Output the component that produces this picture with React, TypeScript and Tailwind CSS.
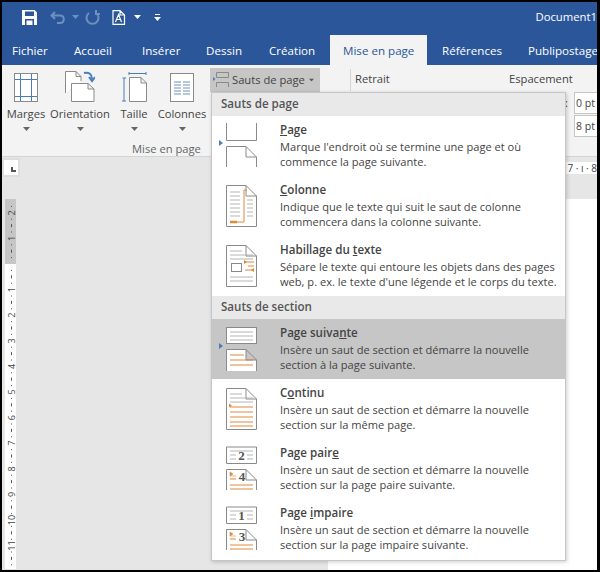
const FONT = { fontFamily: '"Open Sans", "Noto Sans", sans-serif' };

const GRAY = "#8a8a8a";
const LINE = "#b5b5b5";
const ORANGE = "#e08a3c";
const BLUE = "#4a7ebb";

function Caret({ className = "" }: { className?: string }) {
  return (
    <svg width="7" height="4" viewBox="0 0 7 4" className={className}>
      <path d="M0 0H7L3.5 4Z" fill="currentColor" />
    </svg>
  );
}

function SaveIcon() {
  return (
    <svg width="15" height="15" viewBox="0 0 15 15">
      <path d="M0 0H12.5L15 2.5V15H0Z" fill="#fff" />
      <rect x="3" y="1.5" width="9" height="4.5" fill="#2b579a" />
      <rect x="3" y="9" width="9" height="6" fill="#2b579a" />
      <rect x="4.5" y="10.5" width="6" height="4.5" fill="#fff" />
    </svg>
  );
}

function TitleBar() {
  return (
    <div className="flex h-[33px] items-center pb-[3px] pl-[20px] text-white">
      <SaveIcon />
      <svg width="16" height="15" viewBox="0 0 16 15" className="ml-[13px]" fill="none" stroke="#6f8fbf" strokeWidth="2">
        <path d="M5 2L1.5 5.5L5 9M2 5.5H10C15 5.5 15 13 10 13H7" />
      </svg>
      <Caret className="ml-[6px] text-[#6f8fbf]" />
      <svg width="15" height="15" viewBox="0 0 15 15" className="ml-[6px]" fill="none" stroke="#6f8fbf" strokeWidth="2">
        <path d="M4 3A6 6 0 1 0 11 3M11 0V4H15" />
      </svg>
      <svg width="14" height="15" viewBox="0 0 14 15" className="ml-[12px]" fill="none" stroke="#fff" strokeWidth="1.2">
        <path d="M1 .7H8L12.5 5V14.3H1ZM8 .7V5H12.5M3.5 12L6.5 4.5L9.5 12M4.5 9.5H8.5" />
      </svg>
      <Caret className="ml-[8px]" />
      <svg width="7" height="7" viewBox="0 0 7 7" className="ml-[13px]">
        <path d="M1 0H6V1H1ZM0 3H7L3.5 7Z" fill="#fff" />
      </svg>
      <span className="ml-auto text-[11.3px] leading-none whitespace-nowrap text-white">Document1</span>
    </div>
  );
}

function Tabs() {
  const tabs = [
    { label: "Fichier", width: "w-[62px]" },
    { label: "Accueil", width: "w-[68px]" },
    { label: "Insérer", width: "w-[64px]" },
    { label: "Dessin", width: "w-[63px]" },
    { label: "Création", width: "w-[71px]" },
  ];
  return (
    <div className="flex h-[30px] overflow-hidden text-[11.6px] text-white">
      {tabs.map((t) => (
        <div key={t.label} className={`${t.width} shrink-0 pt-[7px] pl-[10px]`}>
          {t.label}
        </div>
      ))}
      <div className="w-[97px] shrink-0 bg-[#f3f3f3] pt-[7px] pl-[13px] whitespace-nowrap text-[#2b579a]">Mise en page</div>
      <div className="w-[86px] shrink-0 pt-[7px] pl-[15px]">Références</div>
      <div className="shrink-0 pt-[7px] pl-[15px] whitespace-nowrap">Publipostage</div>
    </div>
  );
}

function MargesIcon() {
  return (
    <svg width="24" height="29" viewBox="0 0 24 29" fill="none">
      <rect x=".5" y=".5" width="23" height="28" stroke={GRAY} fill="#fff" />
      <path d="M6.5 1V28M17.5 1V28M1 6.5H23M1 23.5H23" stroke={BLUE} />
    </svg>
  );
}

function OrientationIcon() {
  return (
    <svg width="30" height="31" viewBox="0 0 30 31" fill="none">
      <path d="M.5 22V.5H11L16 5.5V10M11 .5V5.5H16" stroke={GRAY} fill="#fff" />
      <path d="M6.5 30.5V12.5H23L29 18V30.5ZM23 12.5V18H29" stroke={GRAY} fill="#fff" />
      <path d="M19 2C24 1 27 3 27 8M24 6L27 10L30 6" stroke={BLUE} strokeWidth="2" />
    </svg>
  );
}

function TailleIcon() {
  return (
    <svg width="25" height="30" viewBox="0 0 25 30" fill="none">
      <path d="M7.5 29.5V5.5H19L24.5 11V29.5ZM19 5.5V11H24.5" stroke={GRAY} fill="#fff" />
      <path d="M.5 6H4M2 6V29M0 29H4M7 1.5H24M7 0V3M24 0V3" stroke={BLUE} />
    </svg>
  );
}

function ColonnesIcon() {
  return (
    <svg width="24" height="29" viewBox="0 0 24 29" fill="none">
      <rect x=".5" y=".5" width="23" height="28" stroke={GRAY} fill="#fff" />
      <path d="M4 9H11M13 9H20M4 12H11M13 12H20M4 15H11M13 15H20M4 18H11M13 18H20M4 21H11M13 21H20" stroke="#6d8fbd" />
    </svg>
  );
}

function RibbonButton({ label, width, children }: { label: string; width: string; children: React.ReactNode }) {
  return (
    <div className={`${width} flex flex-col items-center`}>
      <div className="flex h-[35px] items-end">{children}</div>
      <div className="mt-[4px] text-[11.2px] leading-[16px] whitespace-nowrap text-[#444]">{label}</div>
      <Caret className="mt-[5px] text-[#666]" />
    </div>
  );
}

function Ribbon() {
  return (
    <div className="flex h-[92px] border-b border-[#d4d4d4] bg-[#f3f3f3] pl-[2px] text-[#444]">
      <div className="flex w-[206px] shrink-0 flex-col pt-[2px]">
        <div className="flex">
          <RibbonButton label="Marges" width="w-[44px]">
            <MargesIcon />
          </RibbonButton>
          <RibbonButton label="Orientation" width="w-[64px]">
            <OrientationIcon />
          </RibbonButton>
          <RibbonButton label="Taille" width="w-[44px]">
            <TailleIcon />
          </RibbonButton>
          <RibbonButton label="Colonnes" width="w-[52px]">
            <ColonnesIcon />
          </RibbonButton>
        </div>
        <div className="mt-[10px] pl-[128px] text-[11.2px] leading-[16px] text-[#666]">Mise en page</div>
      </div>
      <div className="mt-[3px] flex h-[24px] w-[110px] shrink-0 items-center bg-[#c6c6c6] pl-[3px]">
        <svg width="16" height="16" viewBox="0 0 16 16" fill="none">
          <path d="M3.5 .5H15.5V5.5H3.5ZM3.5 15V10.5H15.5V15" stroke={GRAY} />
          <path d="M0 5L2.5 7L0 9Z" fill={BLUE} />
        </svg>
        <span className="ml-[3px] text-[11.2px] whitespace-nowrap">Sauts de page</span>
        <Caret className="ml-[3px] scale-75 text-[#555]" />
      </div>
      <div className="mt-[4px] ml-[30px] h-[22px] w-px shrink-0 bg-[#d4d4d4]" />
      <div className="w-[158px] shrink-0 pt-[6px] pl-[4px] text-[11.2px] leading-[16px]">Retrait</div>
      <div className="flex w-[88px] shrink-0 flex-col pt-[6px]">
        <div className="text-[11.2px] leading-[16px] whitespace-nowrap">Espacement</div>
        <div className="mt-[5px] flex">
          <div className="w-[65px] shrink-0 pt-[3px] pr-[6px] text-right text-[11.2px] leading-[16px]">:</div>
          <div className="flex flex-col gap-[1px]">
            <div className="h-[22px] w-[23px] border border-r-0 border-[#c6c6c6] bg-white pl-[1px] text-[10.5px] leading-[20px] whitespace-nowrap">0 pt</div>
            <div className="h-[22px] w-[23px] border border-r-0 border-[#c6c6c6] bg-white pl-[1px] text-[10.5px] leading-[20px] whitespace-nowrap">8 pt</div>
          </div>
        </div>
      </div>
    </div>
  );
}

function VerticalRuler() {
  const unit = 25.6;
  const zero = 65;
  const marks: React.ReactNode[] = [];
  for (let i = -10; i <= 56; i++) {
    const y = zero + (i * unit) / 4;
    if (y < 2 || y > 370) continue;
    if (i % 4 === 0) {
      const n = Math.abs(i / 4);
      if (n === 0) continue;
      marks.push(
        <text key={i} x="0" y="0" transform={`translate(10 ${y}) rotate(-90)`} textAnchor="middle" fontSize="9" fill="#444">
          {n}
        </text>,
      );
    } else if (i % 2 === 0) {
      marks.push(<rect key={i} x="6" y={y - 1.5} width="1" height="3" fill="#555" />);
    } else {
      marks.push(<rect key={i} x="6" y={y - 0.5} width="1" height="1" fill="#555" />);
    }
  }
  return (
    <svg width="11" height="370" viewBox="0 0 11 370" className="mt-[24px] ml-[3px] block overflow-visible">
      <rect width="11" height="65" fill="#c6c6c6" />
      <rect y="65" width="11" height="305" fill="#fff" />
      {marks}
    </svg>
  );
}

function Workspace() {
  return (
    <div className="flex min-h-0 flex-1 overflow-hidden bg-[#e6e6e6]">
      <div className="w-[16px] shrink-0">
        <div className="mt-[3px] ml-[2px] flex h-[15px] w-[14px] items-end justify-end bg-white pr-[2px] pb-[3px] ring-2 ring-[#dedede]">
          <div className="h-[5px] w-[5px] border-b-2 border-l-2 border-[#555]" />
        </div>
        <VerticalRuler />
      </div>
      <div className="flex flex-1 flex-col pl-[310px]">
        <div className="mt-[5px] flex h-[12px] items-center justify-end bg-white text-[10px] leading-none text-[#444]">7 · ı · 8</div>
        <div className="mt-[25px] flex-1 bg-white" />
      </div>
    </div>
  );
}

function Page({ y1 = 30.5, y2 = 51 }: { y1?: number; y2?: number }) {
  return <path d={`M10.5 ${y2}V${y1}H30L40.5 41V${y2}M30 ${y1}V41H40.5`} stroke={GRAY} fill="#fff" />;
}

function FullPage({ children }: { children?: React.ReactNode }) {
  return (
    <>
      <path d="M10.5 9.5H30L40.5 20V50.5H10.5ZM30 9.5V20H40.5" stroke={GRAY} fill="#fff" />
      {children}
    </>
  );
}

const ICONS: Record<string, React.ReactNode> = {
  page: (
    <>
      <path d="M10.5 7V24.5H40.5V7" stroke={GRAY} />
      <Page />
      <path d="M3 24L7 27L3 30Z" fill={BLUE} stroke="none" />
    </>
  ),
  colonne: (
    <FullPage>
      <path d="M14 16H24M14 20H24M14 24H24M14 28H24M14 32H24M14 36H24M14 40H24M31 24H37M31 28H37M31 32H37M31 36H37M31 40H37" stroke={LINE} />
      <path d="M14 46H21" stroke={ORANGE} strokeWidth="2.5" />
      <path d="M21 46H28V14H31" stroke={ORANGE} />
    </FullPage>
  ),
  habillage: (
    <FullPage>
      <path d="M14 15H26M14 19H37M14 23H37M14 41H37M14 45H37" stroke={LINE} />
      <rect x="15.5" y="27.5" width="10" height="8" stroke={GRAY} fill="#fff" />
      <path d="M29 26H38M32 30H38M29 34H38" stroke={ORANGE} />
      <path d="M28 24L31 26L28 28ZM38 32L35 34L38 36Z" fill={ORANGE} stroke="none" />
    </FullPage>
  ),
  suivante: (
    <>
      <rect x="10.5" y="8.5" width="30" height="16" stroke={GRAY} fill="#fff" />
      <path d="M14 13H37M14 17H37M14 21H37" stroke={LINE} />
      <Page y2={52} />
      <path d="M14 36H28M14 41H37M14 46H37" stroke={ORANGE} />
      <path d="M3 24L7 27L3 30Z" fill={BLUE} stroke="none" />
    </>
  ),
  continu: (
    <FullPage>
      <path d="M14 15H26M14 19H37M14 23H37" stroke={LINE} />
      <path d="M14 28H37M14 33H37M14 38H37M14 43H37M14 47H37" stroke={ORANGE} />
      <path d="M13 24.5L16 26.5L13 28.5Z" fill={ORANGE} stroke="none" />
    </FullPage>
  ),
};

function NumberedIcon({ top, bottom }: { top: string; bottom: string }) {
  return (
    <>
      <path d="M10.5 8H40.5M10.5 8V24.5H40.5V8" stroke={GRAY} fill="#fff" />
      <path d="M14 12H37M14 16H20M31 16H37M14 20H20M31 20H37" stroke={LINE} />
      <text x="25.5" y="21" textAnchor="middle" fontSize="13" fontWeight="700" fill="#555" fontFamily='"Liberation Serif", serif'>
        {top}
      </text>
      <Page />
      <path d="M14 40H20M14 46H37M14 50H37" stroke={ORANGE} />
      <path d="M14 33L17 35L14 37ZM14 37H20" fill={ORANGE} stroke={ORANGE} strokeWidth=".6" />
      <text x="26" y="42" textAnchor="middle" fontSize="13" fontWeight="700" fill="#555" fontFamily='"Liberation Serif", serif'>
        {bottom}
      </text>
    </>
  );
}

function MenuItem({
  icon,
  title,
  desc,
  active = false,
}: {
  icon: React.ReactNode;
  title: React.ReactNode;
  desc: string[];
  active?: boolean;
}) {
  return (
    <div className={`flex h-[60px] ${active ? "bg-[#c6c6c6]" : ""}`}>
      <svg width="44" height="60" viewBox="0 0 44 60" fill="none" className="ml-[4px] shrink-0">
        {icon}
      </svg>
      <div className="ml-[20px] pt-[6px]">
        <div className="text-[11.6px] leading-[16px] font-semibold text-[#444]">{title}</div>
        <div className="mt-[1px] text-[11.1px] leading-[15px] whitespace-nowrap text-[#444]">
          {desc.map((d) => (
            <div key={d}>{d}</div>
          ))}
        </div>
      </div>
    </div>
  );
}

function MenuHeader({ label }: { label: string }) {
  return <div className="h-[23px] bg-[#e9e9e9] pl-[9px] text-[11.6px] leading-[22px] font-semibold text-[#555]">{label}</div>;
}

function BreaksMenu() {
  return (
    <div className="absolute top-[92px] left-[211px] w-[355px] border border-[#c6c6c6] bg-white pb-[1px] shadow-[1px_1px_4px_rgba(0,0,0,0.2)]">
      <MenuHeader label="Sauts de page" />
      <MenuItem
        icon={ICONS.page}
        title={<><u>P</u>age</>}
        desc={["Marque l'endroit où se termine une page et où", "commence la page suivante."]}
      />
      <MenuItem
        icon={ICONS.colonne}
        title={<><u>C</u>olonne</>}
        desc={["Indique que le texte qui suit le saut de colonne", "commencera dans la colonne suivante."]}
      />
      <MenuItem
        icon={ICONS.habillage}
        title={<>Habillage du <u>t</u>exte</>}
        desc={["Sépare le texte qui entoure les objets dans des pages", "web, p. ex. le texte d'une légende et le corps du texte."]}
      />
      <MenuHeader label="Sauts de section" />
      <MenuItem
        active
        icon={ICONS.suivante}
        title={<>Page suiva<u>n</u>te</>}
        desc={["Insère un saut de section et démarre la nouvelle", "section à la page suivante."]}
      />
      <MenuItem
        icon={ICONS.continu}
        title={<>C<u>o</u>ntinu</>}
        desc={["Insère un saut de section et démarre la nouvelle", "section sur la même page."]}
      />
      <MenuItem
        icon={<NumberedIcon top="2" bottom="4" />}
        title={<>Page pair<u>e</u></>}
        desc={["Insère un saut de section et démarre la nouvelle", "section sur la page paire suivante."]}
      />
      <MenuItem
        icon={<NumberedIcon top="1" bottom="3" />}
        title={<>Page <u>i</u>mpaire</>}
        desc={["Insère un saut de section et démarre la nouvelle", "section sur la page impaire suivante."]}
      />
    </div>
  );
}

export default function App() {
  return (
    <div style={FONT} className="relative flex h-[572px] w-[600px] flex-col overflow-hidden bg-black pt-[2px] pr-[3px] pb-[2px] pl-[2px]">
      <div className="bg-[#2b579a]">
        <TitleBar />
        <Tabs />
      </div>
      <Ribbon />
      <Workspace />
      <BreaksMenu />
    </div>
  );
}
